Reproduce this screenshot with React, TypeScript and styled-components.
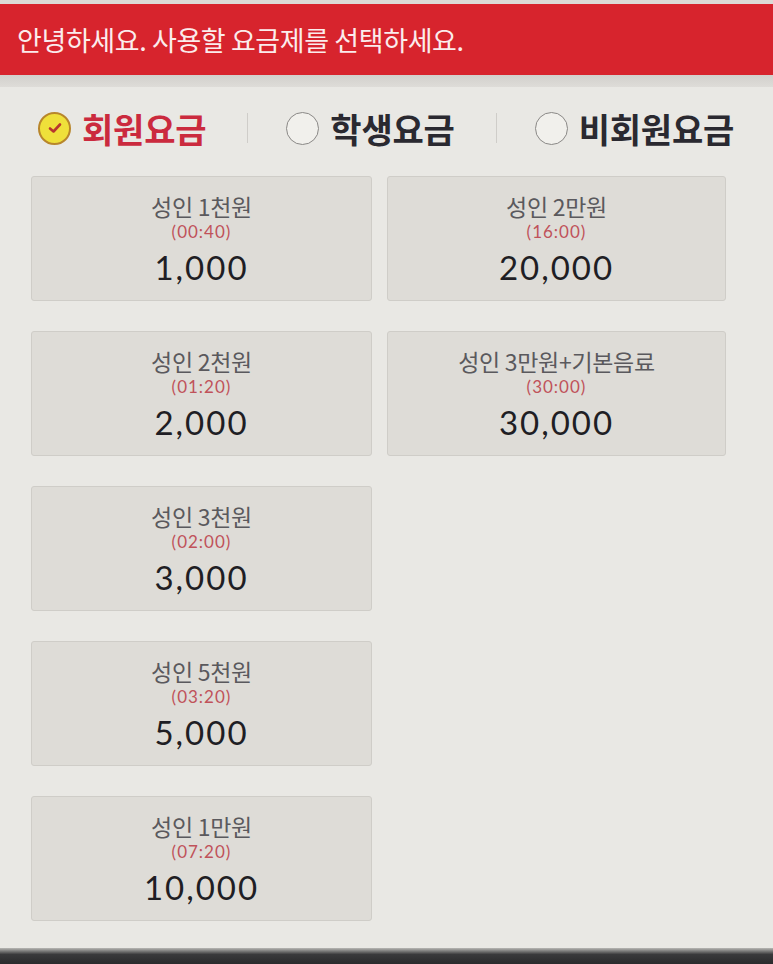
import React from "react";
import styled, { createGlobalStyle } from "styled-components";

const Global = createGlobalStyle`
  html, body { margin: 0; padding: 0; }
  body {
    background: #e8e7e3;
    font-family: "Noto Sans CJK KR", "Noto Sans", sans-serif;
    width: 773px;
    height: 964px;
    overflow: hidden;
  }
`;

const Page = styled.div`
  width: 773px;
  height: 964px;
  display: flex;
  flex-direction: column;
  background: #e9e8e4;
`;

const TopEdge = styled.div`
  height: 4px;
  background: #dcdad6;
`;

const Banner = styled.header`
  height: 71px;
  background: #d7242d;
  color: #fbecec;
  display: flex;
  align-items: center;
  padding: 0 17px;
  font-size: 27px;
  letter-spacing: -0.4px;
  font-weight: 400;
`;

const Shade = styled.div`
  height: 12px;
  background: linear-gradient(#d2d0cc, #dedcd8);
`;

const Tabs = styled.div`
  display: flex;
  align-items: center;
  height: 82px;
  padding: 0 0 0 38px;
`;

const Tab = styled.div<{ $active?: boolean }>`
  display: flex;
  align-items: center;
  gap: 11px;
  font-size: 34px;
  font-weight: 700;
  letter-spacing: -0.2px;
  color: ${(p) => (p.$active ? "#cb2a3e" : "#2a2930")};
`;

const Radio = styled.span<{ $active?: boolean }>`
  width: 33px;
  height: 33px;
  border-radius: 50%;
  box-sizing: border-box;
  display: inline-flex;
  align-items: center;
  justify-content: center;
  border: ${(p) => (p.$active ? "2px solid #b8862b" : "1.5px solid #8a8886")};
  background: ${(p) => (p.$active ? "#efe03a" : "#f1f0ec")};
`;

const Sep = styled.span`
  width: 1px;
  height: 30px;
  background: #cfcdc9;
  margin: 0 38px 0 41px;
`;

const Grid = styled.div`
  display: grid;
  grid-template-columns: 341px 339px;
  grid-auto-rows: 125px;
  column-gap: 15px;
  row-gap: 30px;
  padding: 7px 0 0 31px;
`;

const Card = styled.div`
  background: #dedcd7;
  border: 1px solid #cfcdc8;
  border-radius: 3px;
  box-sizing: border-box;
  display: flex;
  flex-direction: column;
  align-items: center;
  padding-top: 14px;
`;

const Title = styled.div`
  font-size: 23px;
  color: #5a595d;
  line-height: 30px;
  letter-spacing: -0.3px;
`;

const Time = styled.div`
  font-family: "Lato", "Noto Sans", sans-serif;
  font-size: 17px;
  color: #c0525a;
  line-height: 22px;
  letter-spacing: 1px;
`;

const Price = styled.div`
  font-family: "Lato", "Noto Sans", sans-serif;
  font-size: 33px;
  color: #1f1e24;
  line-height: 40px;
  margin-top: 4px;
  letter-spacing: 2px;
`;

const Spacer = styled.div`
  flex: 1;
`;

const BottomEdge = styled.div`
  height: 16px;
  background: linear-gradient(#b8b7b4, #3a3a3c 40%, #2a2a2c);
`;

const plans: Array<{ t: string; time: string; price: string } | null> = [
  { t: "성인 1천원", time: "(00:40)", price: "1,000" },
  { t: "성인 2만원", time: "(16:00)", price: "20,000" },
  { t: "성인 2천원", time: "(01:20)", price: "2,000" },
  { t: "성인 3만원+기본음료", time: "(30:00)", price: "30,000" },
  { t: "성인 3천원", time: "(02:00)", price: "3,000" },
  null,
  { t: "성인 5천원", time: "(03:20)", price: "5,000" },
  null,
  { t: "성인 1만원", time: "(07:20)", price: "10,000" },
];

export default function App() {
  return (
    <>
      <Global />
      <Page>
        <TopEdge />
        <Banner>안녕하세요. 사용할 요금제를 선택하세요.</Banner>
        <Shade />
        <Tabs>
          <Tab $active>
            <Radio $active>
              <svg width="14" height="12" viewBox="0 0 14 12">
                <path d="M2 6.5 L5.5 9.5 L12 2.5" fill="none" stroke="#b8372e" strokeWidth="2.6" strokeLinecap="round" strokeLinejoin="round" />
              </svg>
            </Radio>
            회원요금
          </Tab>
          <Sep />
          <Tab>
            <Radio />
            학생요금
          </Tab>
          <Sep />
          <Tab>
            <Radio />
            비회원요금
          </Tab>
        </Tabs>
        <Grid>
          {plans.map((p, i) =>
            p ? (
              <Card key={i}>
                <Title>{p.t}</Title>
                <Time>{p.time}</Time>
                <Price>{p.price}</Price>
              </Card>
            ) : (
              <div key={i} />
            )
          )}
        </Grid>
        <Spacer />
        <BottomEdge />
      </Page>
    </>
  );
}
